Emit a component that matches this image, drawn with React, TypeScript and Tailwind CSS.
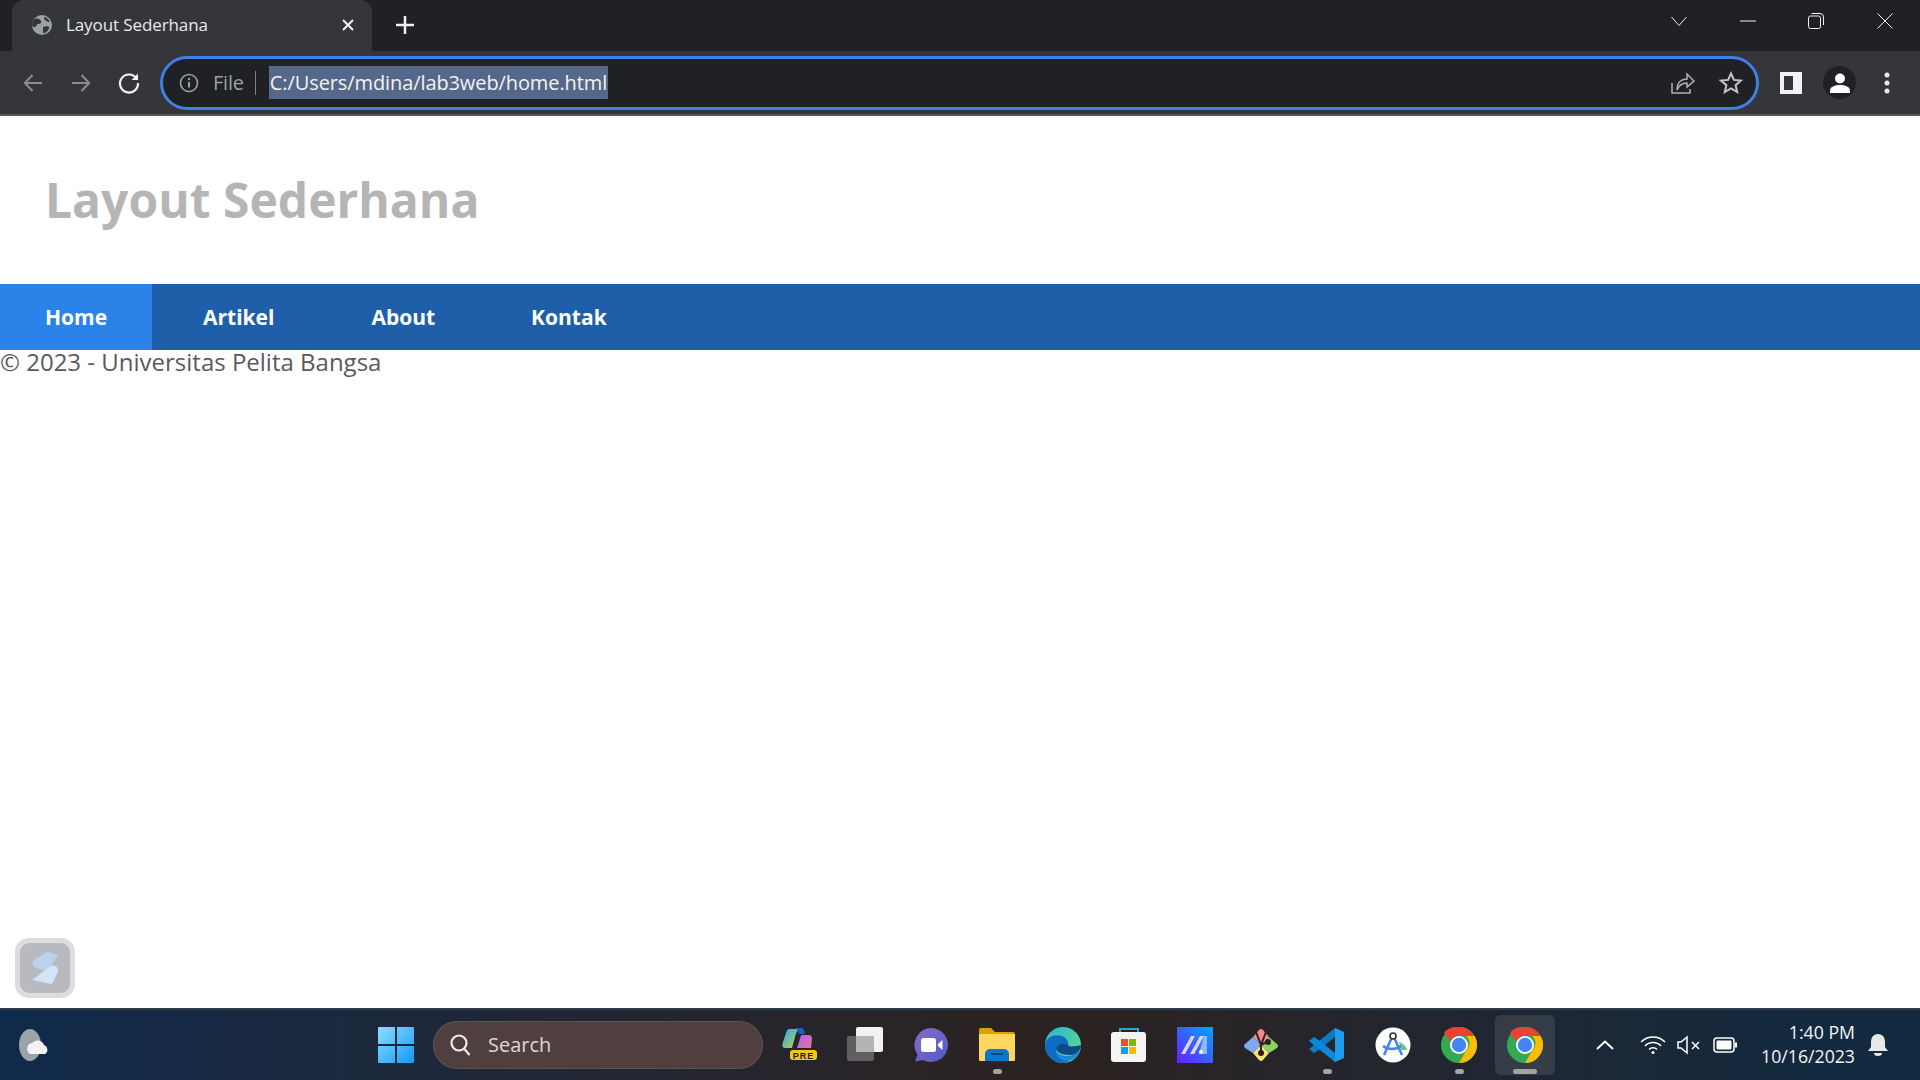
import React from 'react'

// CHROME ICONS

const Back = ({ flip = false }: { flip?: boolean }) => (
  <svg width="24" height="24" viewBox="0 0 24 24" fill="none" stroke="#8b8d90" strokeWidth="2" className={flip ? 'rotate-180' : ''}>
    <path d="M21 12H4M11.5 4 3.8 12l7.7 8" />
  </svg>
)

const WindowControls = () => (
  <div className="ml-auto flex items-center h-full">
    <svg width="18" height="12" viewBox="0 0 18 12" fill="none" stroke="#e8eaed" strokeWidth="1" className="mr-[52px] mt-[-9px]"><path d="M1.5 2 9 10.5 16.5 2" /></svg>
    <svg width="16" height="2" viewBox="0 0 16 2" className="mr-[52px] mt-[-9px]"><path d="M0 1h16" stroke="#f1f3f4" strokeWidth="1" /></svg>
    <svg width="16" height="16" viewBox="0 0 16 16" fill="none" stroke="#f1f3f4" strokeWidth="1" className="mr-[53px] mt-[-9px]">
      <rect x="0.5" y="3" width="12" height="12.5" rx="2" /><path d="M3.5 .5h8.5a3.5 3.5 0 0 1 3.5 3.5v8" />
    </svg>
    <svg width="16" height="16" viewBox="0 0 16 16" fill="none" stroke="#f1f3f4" strokeWidth="1" className="mr-[27px] mt-[-9px]"><path d="M.5.5l15 15M15.5.5l-15 15" /></svg>
  </div>
)

// TASKBAR ICONS

const Copilot = () => (
  <svg width="36" height="36" viewBox="0 0 36 36">
    <defs>
      <linearGradient id="cpa" x1="0" y1="0" x2="1" y2="1"><stop offset="0" stopColor="#2aa8e8" /><stop offset="1" stopColor="#c6d24a" /></linearGradient>
      <linearGradient id="cpb" x1="0" y1="0" x2="1" y2="1"><stop offset="0" stopColor="#a868e8" /><stop offset="1" stopColor="#f0709a" /></linearGradient>
    </defs>
    <path d="M8 2h11c-3 1-4 4-5 8l-3 11H4c-3 0-3-3-2-6l3-9c.6-2 1.600-4 3-4Z" fill="url(#cpa)" />
    <path d="M14 1h6c2 0 3 1 4 6h-6c-1-4-2-5-4-6Z" fill="#1a5fc8" />
    <path d="M21 8h7c2 0 3 2 3 4l-1 9H16l3-9c.4-2 1-4 2-4Z" fill="url(#cpb)" />
    <rect x="9" y="23" width="27" height="10" rx="3" fill="#f5c518" />
    <text x="22.5" y="31.500" textAnchor="middle" fontSize="9" fontWeight="700" letterSpacing="1" fontFamily="'Liberation Sans', sans-serif" fill="#222">PRE</text>
  </svg>
)

const TaskView = () => (
  <svg width="36" height="36" viewBox="0 0 36 36">
    <rect x="0" y="9" width="27" height="25" rx="2" fill="#5f5f5f" />
    <rect x="9" y="0" width="27" height="25" rx="2" fill="#f2f2f2" />
    <rect x="9" y="9" width="18" height="16" fill="#b4b4b4" />
  </svg>
)

const Meet = () => (
  <svg width="36" height="36" viewBox="0 0 36 36">
    <defs><linearGradient id="mt" x1="0" y1="0" x2="1" y2="1"><stop offset="0" stopColor="#8a6cc8" /><stop offset="1" stopColor="#4f58c8" /></linearGradient></defs>
    <path d="M18 1a17 17 0 1 1-8 32l-8 1.500 2.500-7A17 17 0 0 1 18 1Z" fill="url(#mt)" />
    <rect x="8" y="11" width="15" height="14" rx="2.500" fill="#fff" />
    <path d="m25 17 4.500-4v10L25 19Z" fill="#fff" />
  </svg>
)

const Folder = () => (
  <svg width="36" height="36" viewBox="0 0 36 36">
    <path d="M0 3a2 2 0 0 1 2-2h10l4 4h18a2 2 0 0 1 2 2v4H0Z" fill="#d9a106" />
    <path d="M0 7h36v26a1 1 0 0 1-1 1H1a1 1 0 0 1-1-1Z" fill="#fdd75f" />
    <path d="M6 34v-7a5 5 0 0 1 5-5h14a5 5 0 0 1 5 5v7Z" fill="#0a78cf" />
    <rect x="12" y="26" width="12" height="2" fill="#03406e" />
  </svg>
)

const Edge = () => (
  <svg width="36" height="36" viewBox="0 0 36 36">
    <defs><linearGradient id="eg" x1="0" y1="0" x2="1" y2="1"><stop offset="0" stopColor="#1fb6d8" /><stop offset="1" stopColor="#6fe07a" /></linearGradient></defs>
    <circle cx="18" cy="18" r="18" fill="url(#eg)" />
    <path d="M0 18C2 9 10 7 17 9c5 2 7 6 6 10-5-4-11-3-12 3-1 6 5 12 14 12-3 1.500-5 2-7 2A18 18 0 0 1 0 18Z" fill="#0f6cc4" />
    <path d="M11 22c1-6 8-7 13-3 3 1 8 0 12-1 0 6-5 10-10 10-6 0-13-1-15-6Z" fill="#0c4a8c" />
    <path d="M21 34c-6-1-10-6-10-12 1 5 6 7 10 7 5 0 11-2 14-6-2 7-8 11-14 11Z" fill="#1a86d8" />
  </svg>
)

const Store = () => (
  <svg width="36" height="36" viewBox="0 0 36 36">
    <path d="M9 6V2h18v4" fill="none" stroke="#20a8e0" strokeWidth="2" />
    <rect x="0" y="5" width="35" height="30" rx="3" fill="#f4f4f4" />
    <rect x="10" y="12" width="7" height="7" fill="#ea4f25" />
    <rect x="18" y="12" width="7" height="7" fill="#7fba00" />
    <rect x="10" y="20" width="7" height="7" fill="#00a4ef" />
    <rect x="18" y="20" width="7" height="7" fill="#ffb900" />
  </svg>
)

const MAppIcon = () => (
  <svg width="36" height="36" viewBox="0 0 36 36">
    <defs><linearGradient id="ma" x1="1" y1="0" x2="0" y2="1"><stop offset="0" stopColor="#00a8ff" /><stop offset="1" stopColor="#6a1cff" /></linearGradient></defs>
    <rect width="36" height="36" fill="url(#ma)" />
    <path d="M4 27 14 9h4L8 27ZM13 27 23 9h4L17 27Z" fill="#d8d4f8" />
    <path d="M27 9h3v18h-8Z" fill="#8fb8ff" />
    <circle cx="24" cy="25" r="2" fill="#fff" />
  </svg>
)

const GitApp = () => (
  <svg width="36" height="36" viewBox="0 0 36 36">
    <path d="m18 18-8-8 6-7q2-2 4 0l6 7Z" fill="#f58a8a" />
    <path d="m18 18-8-8-8 7q-2 2 0 4l8 5Z" fill="#7eaaf5" />
    <path d="m18 18 8-8 8 7q2 2 0 4l-8 5Z" fill="#8cd260" />
    <path d="m18 18-8 8 6 7q2 2 4 0l6-7Z" fill="#f8e07a" />
    <path d="M13 5l5 13v8M23 5l-5 13 6-3" stroke="#2a2222" strokeWidth="2" fill="none" />
    <circle cx="18" cy="26" r="3" fill="#2a2222" /><circle cx="25" cy="15" r="3" fill="#2a2222" />
  </svg>
)

const VSCode = () => (
  <svg width="36" height="36" viewBox="0 0 36 36">
    <path d="M26 1 35 5v26l-9 4Z" fill="#1f9cf0" />
    <path d="M26 1v9L11 22l-6 4-5-4L26 1Z" fill="#0a7ac4" />
    <path d="M26 35v-9L11 14 5 10l-5 4L26 35Z" fill="#0e88d8" />
  </svg>
)

const AndroidStudio = () => (
  <svg width="36" height="36" viewBox="0 0 36 36">
    <circle cx="18" cy="18" r="17.500" fill="#fff" />
    <path d="M24 15c4 1 7 4 8 8h-6Z" fill="#62c98a" />
    <path d="M18 8 9 28M18 8l9 20M8 19c5 4 13 4 18 0" stroke="#4285f4" strokeWidth="2.500" fill="none" />
    <circle cx="18" cy="9" r="3" fill="#fff" stroke="#263238" strokeWidth="1.600" />
  </svg>
)

const ChromeLogo = () => (
  <svg width="36" height="36" viewBox="0 0 36 36">
    <circle cx="18" cy="18" r="18" fill="#34a853" />
    <path d="M18 0a18 18 0 0 1 15.600 9H18a9 9 0 0 0-8.400 5.800L3 5.500A18 18 0 0 1 18 0Z" fill="#ea4335" />
    <path d="M33.600 9A18 18 0 0 1 18 36l7.800-13.500A9 9 0 0 0 25 9Z" fill="#fbbc04" />
    <circle cx="18" cy="18" r="9" fill="#fff" />
    <circle cx="18" cy="18" r="7.200" fill="#4285f4" />
  </svg>
)

// TASKBAR

const TaskbarItem = ({ children, dot, active }: { children: React.ReactNode; dot?: boolean; active?: boolean }) => (
  <div className={`relative w-[60px] h-[60px] mx-[3px] rounded-md flex items-center justify-center ${active ? 'bg-white/10' : ''}`}>
    {children}
    {dot && <span className={`absolute bottom-[1px] h-[5px] rounded-full bg-[#a3a3a3] ${active ? 'w-6' : 'w-[9px]'}`} />}
  </div>
)

const Taskbar = () => (
  <div className="relative h-[72px] flex items-center border-t-2 border-[#2f3d4a] bg-gradient-to-r from-[#0f2a4b] via-[#2c2220] to-[#12293f] from-0% via-55% to-95% font-['Open_Sans',sans-serif]">
    <svg width="36" height="36" viewBox="0 0 36 36" className="ml-[14px] shrink-0">
      <ellipse cx="16" cy="18" rx="11" ry="16" fill="#9aa3a8" />
      <path d="M16 27a6 6 0 0 1 2-11 7 7 0 0 1 12 2 5 5 0 0 1 1 9Z" fill="#f2f2f2" />
    </svg>
    <div className="w-[364px] flex justify-end shrink-0">
      <svg width="36" height="36" viewBox="0 0 36 36">
        <defs><linearGradient id="win" x1="0" y1="0" x2="1" y2="1"><stop offset="0" stopColor="#8fdcff" /><stop offset="1" stopColor="#0f9bfa" /></linearGradient></defs>
        <path d="M0 1a1 1 0 0 1 1-1h16v17H0ZM19 0h16a1 1 0 0 1 1 1v16H19ZM0 19h17v17H1a1 1 0 0 1-1-1ZM19 19h17v16a1 1 0 0 1-1 1H19Z" fill="url(#win)" />
      </svg>
    </div>
    <div className="ml-[19px] w-[330px] h-[48px] rounded-full bg-[#4f3f3e] border border-white/10 flex items-center pl-[15px] text-[#d9d9d9] text-[20px] shrink-0">
      <svg width="24" height="24" viewBox="0 0 24 24" fill="none" stroke="#ececec" strokeWidth="2.200"><circle cx="10" cy="10" r="7.500" /><path d="m15.500 16 5 6" /></svg>
      <span className="ml-[15px]">Search</span>
    </div>
    <div className="ml-[3px] flex items-center">
      <TaskbarItem><Copilot /></TaskbarItem>
      <TaskbarItem><TaskView /></TaskbarItem>
      <TaskbarItem><Meet /></TaskbarItem>
      <TaskbarItem dot><Folder /></TaskbarItem>
      <TaskbarItem><Edge /></TaskbarItem>
      <TaskbarItem><Store /></TaskbarItem>
      <TaskbarItem><MAppIcon /></TaskbarItem>
      <TaskbarItem><GitApp /></TaskbarItem>
      <TaskbarItem dot><VSCode /></TaskbarItem>
      <TaskbarItem><AndroidStudio /></TaskbarItem>
      <TaskbarItem dot><ChromeLogo /></TaskbarItem>
      <TaskbarItem dot active><ChromeLogo /></TaskbarItem>
    </div>
    <div className="ml-auto flex items-center text-white">
      <svg width="18" height="10" viewBox="0 0 18 10" fill="none" stroke="#fff" strokeWidth="2"><path d="m1 9 8-7.500L17 9" /></svg>
      <svg width="26" height="20" viewBox="0 0 26 20" fill="none" stroke="#fff" strokeWidth="1.600" className="ml-[26px]">
        <path d="M1 7a17 17 0 0 1 24 0M5 11a11 11 0 0 1 16 0M9 14.500a5.500 5.500 0 0 1 8 0" /><circle cx="13" cy="17.500" r="1.500" fill="#fff" stroke="none" />
      </svg>
      <svg width="24" height="20" viewBox="0 0 24 20" fill="none" stroke="#fff" strokeWidth="1.500" className="ml-[11px]">
        <path d="M1 7v6h3l6 5V2L4 7Zm14 0 7 7m0-7-7 7" />
      </svg>
      <svg width="24" height="16" viewBox="0 0 24 16" fill="none" className="ml-[12px]">
        <rect x="1" y="1" width="20" height="14" rx="3" stroke="#fff" strokeWidth="1.500" /><rect x="3.500" y="3.500" width="15" height="9" rx="1" fill="#fff" /><rect x="22" y="5.500" width="2" height="5" fill="#fff" />
      </svg>
      <div className="ml-[24px] mt-[-3px] text-right text-[17.7px] leading-[24px] text-[#f5f5f5]">
        <div>1:40 PM</div>
        <div>10/16/2023</div>
      </div>
      <svg width="22" height="24" viewBox="0 0 22 24" fill="#e8e8e8" className="ml-[12px] mr-[31px]">
        <path d="M11 1a7 7 0 0 1 7 7v6l3 4H1l3-4V8a7 7 0 0 1 7-7ZM7 20h8a4 3 0 0 1-8 0Z" />
      </svg>
    </div>
  </div>
)

export default function App() {
  return (
    <div className="w-[1920px] h-[1080px] flex flex-col overflow-hidden bg-white relative">
      {/* TAB STRIP */}
      <div className="h-[51px] bg-[#202124] flex items-end">
        <div className="ml-[12px] w-[360px] shrink-0 h-[51px] bg-[#35363a] rounded-t-[12px] flex items-center pl-[20px] pb-[2px] font-['Open_Sans',sans-serif] text-[17px] text-[#e8eaed]">
          <svg width="20" height="20" viewBox="0 0 20 20" className="shrink-0">
            <circle cx="10" cy="10" r="10" fill="#9aa0a6" />
            <path d="M3 4c3-1 5 0 6 2s-1 3-3 3-1 3-3 3-3-1-3-2 1-5 3-6Zm8 8c2-1 5-1 6 0s-2 5-4 6-2-1-2-3 0-2 0-3ZM12 2c2 0 5 2 6 5-2 0-4-1-5-2s-1-2-1-3Z" fill="#35363a" />
          </svg>
          <span className="ml-[14px] tracking-[-0.1px]">Layout Sederhana</span>
          <svg width="12" height="12" viewBox="0 0 12 12" className="ml-auto mr-[18px]" stroke="#f1f3f4" strokeWidth="2"><path d="m1 1 10 10M11 1 1 11" /></svg>
        </div>
        <svg width="20" height="20" viewBox="0 0 20 20" stroke="#f1f3f4" strokeWidth="2.500" className="ml-[23px] mb-[16px]"><path d="M10 1v18M1 10h18" /></svg>
        <WindowControls />
      </div>

      {/* TOOLBAR */}
      <div className="h-[63px] bg-[#35363a] flex items-center">
        <div className="ml-[21px]"><Back /></div>
        <div className="ml-[24px]"><Back flip /></div>
        <svg width="24" height="24" viewBox="0 0 24 24" fill="none" stroke="#f1f3f4" strokeWidth="2.200" className="ml-[24px]">
          <path d="M19.500 7.500A9 9 0 1 0 21 12" /><path d="M21 2.500V9h-6.500Z" fill="#f1f3f4" stroke="none" />
        </svg>
        <div className="ml-[19px] w-[1599px] h-[54px] bg-[#202124] border-[3px] border-[#3f7fe6] rounded-full flex items-center font-['Open_Sans',sans-serif] text-[20px]">
          <svg width="20" height="20" viewBox="0 0 20 20" fill="none" stroke="#9aa0a6" strokeWidth="1.600" className="ml-[16px]">
            <circle cx="10" cy="10" r="8.500" /><path d="M10 9v5.500" strokeWidth="2" /><circle cx="10" cy="6" r="1.200" fill="#9aa0a6" stroke="none" />
          </svg>
          <span className="ml-[14px] text-[#9aa0a6] tracking-[-0.2px]">File</span>
          <span className="ml-[11px] w-[1px] h-[24px] bg-[#7d8085]" />
          <span className="ml-[13px] px-[1px] h-[33px] leading-[33px] bg-[#56688a] text-[#f1f3f4] tracking-[-0.1px]">C:/Users/mdina/lab3web/home.html</span>
          <svg width="24" height="24" viewBox="0 0 24 24" fill="none" stroke="#aeb1b5" strokeWidth="1.500" className="ml-auto">
            <path d="M1 12v10h18v-4" /><path d="M6 19c0-7 4-11 10-11V3l7 7-7 6v-4c-5 0-8 2-10 7Z" />
          </svg>
          <svg width="24" height="24" viewBox="0 0 24 24" fill="none" stroke="#c4c7ca" strokeWidth="2" className="ml-[24px] mr-[13px]">
            <path d="m12 2.500 2.900 6.400 7 .7-5.300 4.600 1.600 6.800-6.200-3.600L5.800 21l1.600-6.800L2 9.600l7.100-.7Z" />
          </svg>
        </div>
        <svg width="22" height="22" viewBox="0 0 22 22" className="ml-[21px]"><path d="M0 0h22v22H0Z" fill="#f1f3f4" /><rect x="4" y="4" width="9" height="14" fill="#35363a" /></svg>
        <div className="ml-[21px] w-[33px] h-[33px] rounded-full bg-[#202124] flex items-center justify-center">
          <svg width="20" height="20" viewBox="0 0 20 20" fill="#fff"><circle cx="10" cy="5.500" r="5" /><path d="M0 20v-3c0-3 5-5 10-5s10 2 10 5v3Z" /></svg>
        </div>
        <svg width="6" height="22" viewBox="0 0 6 22" fill="#e8eaed" className="ml-[28px]"><circle cx="3" cy="3" r="2.500" /><circle cx="3" cy="11" r="2.500" /><circle cx="3" cy="19" r="2.500" /></svg>
      </div>
      <div className="h-[2px] bg-[#55575b]" />

      {/* PAGE */}
      <div className="flex-1 relative font-['Open_Sans',sans-serif]">
        <header className="h-[168px] pl-[45px] pt-[52px]">
          <h1 className="text-[48px] leading-[64px] font-bold text-[#b5b5b5]">Layout Sederhana</h1>
        </header>
        <nav className="h-[66px] bg-[#1f5faa] flex text-[21px] font-bold text-white leading-[66px]">
          <a className="w-[152px] pl-[45px] bg-[#2b83ea]">Home</a>
          <a className="ml-[51px]">Artikel</a>
          <a className="ml-[97px]">About</a>
          <a className="ml-[96px]">Kontak</a>
        </nav>
        <footer className="text-[24px] leading-[24px] text-[#5a5a5a] font-normal">© 2023 - Universitas Pelita Bangsa</footer>

        {/* floating launcher over the page */}
        <div className="absolute left-[15px] bottom-[10px] w-[60px] h-[60px] rounded-[14px] border-[5px] border-[#dcdde1] bg-[#b9bac0] flex items-center justify-center">
          <svg width="27" height="33" viewBox="0 0 27 33">
            <path d="M15 0 26 3 15 19Q3 16 1 13 0 10 2 8Z" fill="#bcd3ee" />
            <path d="M20 13Q27 14 26 20L20 32 0 28Z" fill="#d2e4f8" />
          </svg>
        </div>
      </div>

      <Taskbar />
    </div>
  )
}
